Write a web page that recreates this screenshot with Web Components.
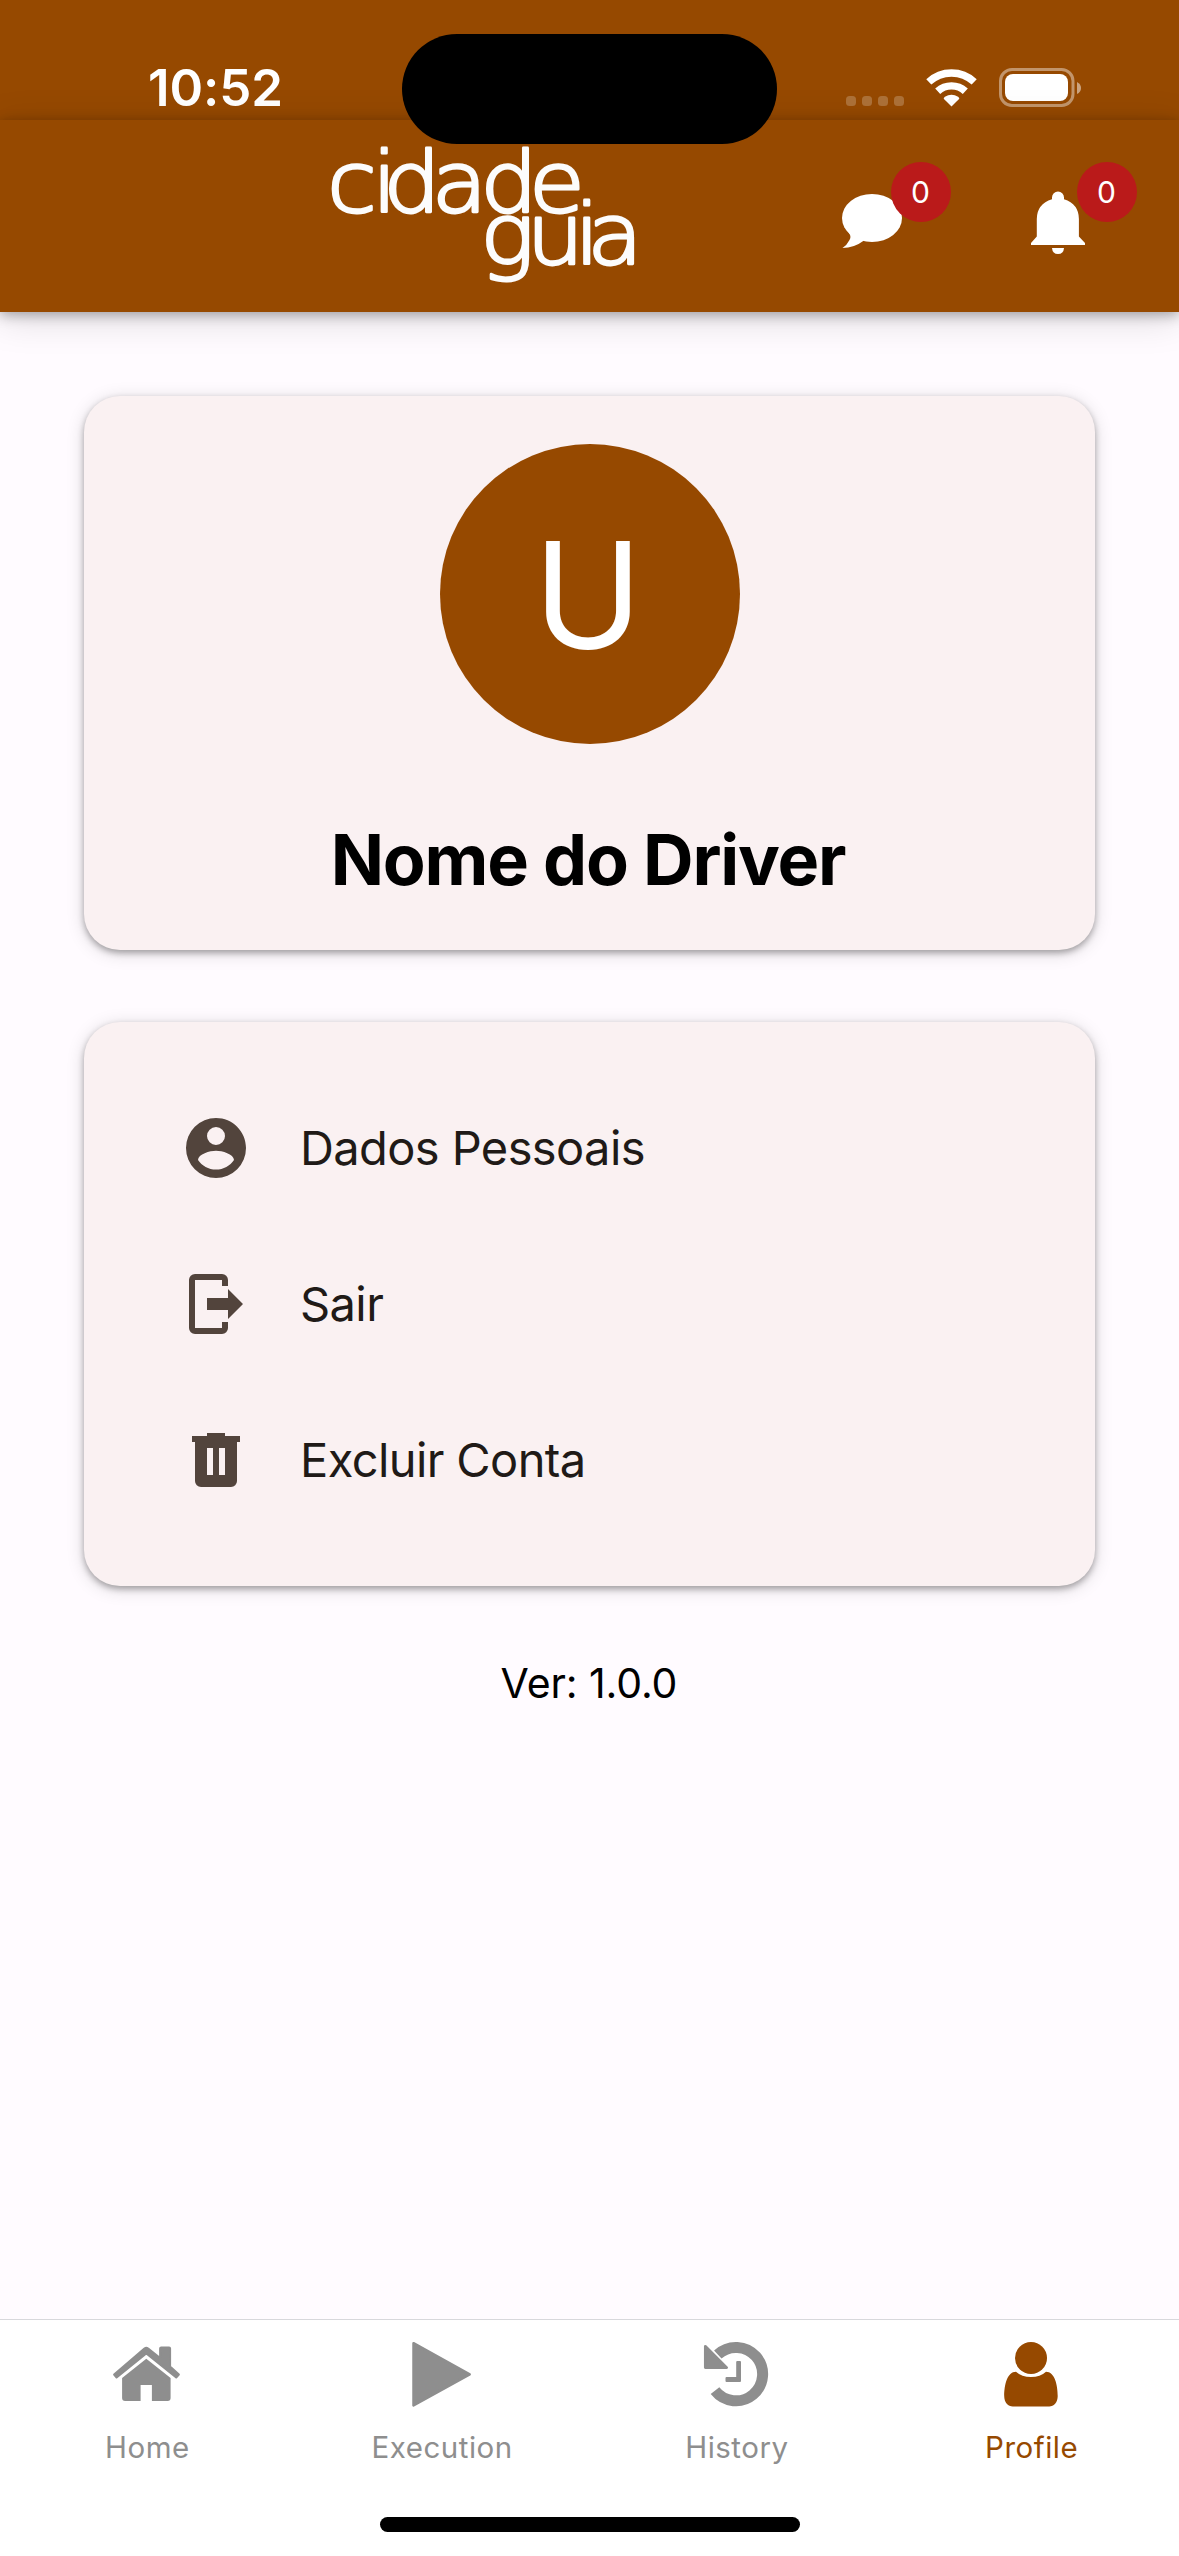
<!DOCTYPE html>
<html lang="pt-BR">
<head>
<meta charset="utf-8">
<title>Cidade Guia</title>
<style>
  html, body { margin: 0; padding: 0; }
  body {
    width: 1179px; height: 2556px; overflow: hidden;
    font-family: Inter, "Liberation Sans", sans-serif;
    --brand: #964900;
    --badge: #ba1a1a;
    --surface: #fffbff;
    --card: #faf1f2;
    --muted: #8e8e8e;
  }
</style>
</head>
<body>
<app-screen>
  <status-bar time="10:52"></status-bar>
  <app-header></app-header>
  <profile-card initial="U">Nome do Driver</profile-card>
  <menu-card>
    <menu-item icon="account">Dados Pessoais</menu-item>
    <menu-item icon="exit">Sair</menu-item>
    <menu-item icon="trash">Excluir Conta</menu-item>
  </menu-card>
  <app-version>Ver: 1.0.0</app-version>
  <tab-bar slot="tabs">
    <tab-item icon="home">Home</tab-item>
    <tab-item icon="play">Execution</tab-item>
    <tab-item icon="history">History</tab-item>
    <tab-item icon="person" active>Profile</tab-item>
  </tab-bar>
</app-screen>

<script>
const define = (name, render) => customElements.define(name, class extends HTMLElement {
  constructor() {
    super();
    this.attachShadow({ mode: 'open' }).innerHTML = render(this);
  }
});

define('app-screen', () => `
  <style>
    :host { display: flex; flex-direction: column; width: 1179px; height: 2556px; background: var(--surface); position: relative; }
    main { flex: 1; display: flex; flex-direction: column; min-height: 0; }
    .island { position: absolute; left: 402px; top: 34px; width: 375px; height: 110px; border-radius: 55px; background: #000; }
  </style>
  <main><slot></slot></main>
  <slot name="tabs"></slot>
  <div class="island"></div>`);

define('status-bar', el => `
  <style>
    :host { display: flex; justify-content: space-between; height: 120px; box-sizing: border-box; padding: 56px 97px 0 148px; background: var(--brand); color: #fff; }
    .time { font-size: 51px; font-weight: 600; line-height: 64px; letter-spacing: -0.1px; }
    svg { display: block; margin-top: 8px; }
  </style>
  <div class="time">${el.getAttribute('time')}</div>
  <svg width="237" height="48" viewBox="845 64 237 48">
    <g fill="#fff" fill-opacity=".22">
      <rect x="846" y="96" width="10" height="10" rx="3.5"/><rect x="862" y="96" width="10" height="10" rx="3.5"/>
      <rect x="878" y="96" width="10" height="10" rx="3.5"/><rect x="894" y="96" width="10" height="10" rx="3.5"/>
    </g>
    <g fill="none" stroke="#fff" stroke-width="7.4">
      <path d="M928.8 81.900A33.300 33.300 0 0 1 974.200 81.900"/>
      <path d="M937.700 91.300A20.300 20.300 0 0 1 965.300 91.300"/>
    </g>
    <path d="M951.500 106.500L943.700 98.700Q943.700 97.500 944.900 96.700A12.500 12.500 0 0 1 958.100 96.700Q959.300 97.500 959.300 98.700Z" fill="#fff"/>
    <rect x="1000.500" y="69.500" width="72.500" height="36" rx="11.500" fill="none" stroke="#fff" stroke-opacity=".42" stroke-width="3"/>
    <rect x="1005" y="74" width="63" height="27" rx="8" fill="#fff"/>
    <path d="M1077 82Q1081 84 1081 88T1077 94Z" fill="#fff" fill-opacity=".5"/>
  </svg>`);

define('app-header', () => `
  <style>
    :host { display: flex; height: 192px; flex: none; box-sizing: border-box; padding: 26px 42px 0 325px; justify-content: space-between; background: var(--brand);
      box-shadow: 0 6px 36px rgba(0,0,0,.15), 0 3px 12px rgba(0,0,0,.3); }
    svg { display: block; overflow: visible; }
    .logo { font-family: "DejaVu Sans Light", "DejaVu Sans", sans-serif; font-size: 84px; font-weight: 200; fill: #fcfcfc; stroke: #fcfcfc; stroke-width: 2.8px; stroke-linejoin: round; }
    .actions { display: flex; gap: 80px; padding-top: 16px; }
  </style>
  <svg width="320" height="146" viewBox="325 146 320 146">
    <g transform="scale(1.08 1)">
      <text class="logo" y="212" x="302.700 344.400 354.800 399.800 444.600 489.900">cidade</text>
      <text class="logo" y="264.500" x="444.600 487.600 531.900 543.800">guia</text>
    </g>
  </svg>
  <div class="actions">
    <header-action icon="chat" count="0"></header-action>
    <header-action icon="bell" count="0"></header-action>
  </div>`);

const headerIcons = {
  chat: `<svg width="60" height="64" viewBox="842 192 60 64"><ellipse cx="872" cy="218" rx="30" ry="24"/><path d="M848 232Q852 236 849.500 240Q847 245 842.500 248Q854 248 864 240.500Z"/></svg>`,
  bell: `<svg width="60" height="64" viewBox="1028 191 60 64"><path d="M1052 197.500A6 6 0 0 1 1064 197.500V199.200Q1078.900 204 1078.900 219V236.500L1085 243V245H1031V243L1036.800 236.500V219Q1036.800 204 1052 199.200Z"/><path d="M1052 248H1064Q1063.500 254 1058 254T1052 248Z"/></svg>`
};
define('header-action', el => `
  <style>
    :host { display: flex; align-items: flex-start; width: 106px; height: 100px; position: relative; color: #fff; }
    svg { display: block; fill: #fff; margin: ${el.getAttribute('icon') === 'chat' ? 30 : 29}px 0 0 -3px; }
    .badge { position: absolute; right: 0; top: 0; width: 60px; height: 60px; border-radius: 50%; background: var(--badge); font-size: 30px; line-height: 60px; text-align: center; text-indent: -1px; }
  </style>
  ${headerIcons[el.getAttribute('icon')]}
  <span class="badge">${el.getAttribute('count')}</span>`);

const cardBox = 'border-radius: 36px; background: var(--card); box-shadow: 0 3px 18px rgba(0,0,0,.15), 0 3px 6px rgba(0,0,0,.3);';

define('profile-card', el => `
  <style>
    :host { display: flex; flex-direction: column; align-items: center; flex: none; box-sizing: border-box; height: 554px; margin: 84px 84px 0; padding-top: 48px; ${cardBox} }
    .avatar { width: 300px; height: 300px; border-radius: 50%; background: var(--brand); color: #fff; font-size: 147px; font-weight: 400; line-height: 301px; text-align: center; text-indent: -3px; }
    .name { margin: 70px 3px 0 0; font-size: 70px; font-weight: 700; line-height: 92px; letter-spacing: -1.2px; color: #000; white-space: nowrap; }
  </style>
  <div class="avatar">${el.getAttribute('initial')}</div>
  <div class="name"><slot></slot></div>`);

define('menu-card', () => `
  <style>
    :host { display: flex; flex-direction: column; flex: none; box-sizing: border-box; height: 564px; margin: 72px 84px 0; padding: 48px 96px; ${cardBox} }
  </style><slot></slot>`);

const menuIcons = {
  account: 'M12,19.2C9.5,19.2 7.29,17.92 6,16C6.03,14 10,12.9 12,12.9C14,12.9 17.97,14 18,16C16.71,17.92 14.5,19.2 12,19.2M12,5A3,3 0 0,1 15,8A3,3 0 0,1 12,11A3,3 0 0,1 9,8A3,3 0 0,1 12,5M12,2A10,10 0 0,0 2,12A10,10 0 0,0 12,22A10,10 0 0,0 22,12C22,6.47 17.5,2 12,2Z',
  exit: 'M5 2H14A2 2 0 0 1 16 4V6H14V4H5V20H14V18H16V20A2 2 0 0 1 14 22H5A2 2 0 0 1 3 20V4A2 2 0 0 1 5 2ZM16 7L21 12L16 17V14H9V10H16Z',
  trash: 'M9 3H15V4H20V6H19V19A2 2 0 0 1 17 21H7A2 2 0 0 1 5 19V6H4V4H9ZM9 8V17H11V8ZM13 8V17H15V8Z'
};
define('menu-item', el => `
  <style>
    :host { display: flex; align-items: center; gap: 48px; height: 156px; color: #201a17; font-size: 47px; line-height: 72px; letter-spacing: -0.6px; white-space: nowrap; }
    svg { display: block; fill: #52443c; flex: none; }
  </style>
  <svg width="72" height="72" viewBox="0 0 24 24"><path fill-rule="evenodd" d="${menuIcons[el.getAttribute('icon')]}"/></svg>
  <span><slot></slot></span>`);

define('app-version', () => `
  <style>:host { display: block; margin-top: 67px; text-align: center; font-size: 41px; line-height: 60px; letter-spacing: -0.1px; text-indent: -1px; color: #000; }</style><slot></slot>`);

define('tab-bar', () => `
  <style>
    :host { display: flex; flex-direction: column; justify-content: space-between; align-items: center; height: 237px; box-sizing: border-box; padding-bottom: 24px; border-top: 1px solid #d8d8dc; background: #fff; }
    nav { display: flex; width: 100%; }
    .grip { width: 420px; height: 15px; border-radius: 8px; background: #000; }
  </style>
  <nav><slot></slot></nav><div class="grip"></div>`);

const tabIcons = {
  home: `<svg width="80" height="72" viewBox="107.400 2338 80 72"><path d="M117 2377.500L114.500 2374.500L144.800 2348.500Q146.700 2347.200 148.600 2348.500L160.500 2358V2348.500Q160.500 2347.500 161.500 2347.500H169.500Q170.500 2347.500 170.500 2348.500V2366.500L179.300 2374.500L176.600 2377.500L146.700 2353.500Z" stroke="currentColor" stroke-width="2" stroke-linejoin="round"/><path d="M146.700 2358.700L171 2378V2398Q171 2401 168 2401H152.300V2385H141V2401H125.500Q122.500 2401 122.500 2398V2378Z"/></svg>`,
  play: `<svg width="80" height="72" viewBox="402 2338 80 72"><path d="M413.500 2343.200L469.700 2374.300L413.500 2405.400Z" stroke="currentColor" stroke-width="2.500" stroke-linejoin="round"/></svg>`,
  history: `<svg width="80" height="72" viewBox="697 2338 80 72"><path d="M715 2390.700A26.700 26.700 0 1 0 717.800 2354.500" fill="none" stroke="currentColor" stroke-width="11"/><path d="M705.300 2346.300L726.700 2367.600H705.300Z" stroke="currentColor" stroke-width="2.700" stroke-linejoin="round"/><path d="M737.200 2361H740Q741 2361 741 2362V2381Q741 2382 740 2382H726.500Q725.500 2382 725.500 2381V2378Q725.500 2377 726.500 2377H736.200V2362Q736.200 2361 737.200 2361Z"/></svg>`,
  person: `<svg width="80" height="72" viewBox="991.800 2338 80 72"><circle cx="1030.800" cy="2358" r="16"/><path d="M1015.800 2371.700Q1021.500 2377 1030.800 2377T1045.800 2371.700C1054.500 2371.700 1057.500 2385 1057.500 2396C1057.500 2402.500 1053.500 2406.500 1049 2406.500H1012.600C1008 2406.500 1004 2402.500 1004 2396C1004 2385 1007 2371.700 1015.800 2371.700Z"/></svg>`
};
define('tab-item', el => `
  <style>
    :host { flex: 1; display: flex; flex-direction: column; align-items: center; padding-top: 18px; color: var(--muted); }
    :host([active]) { color: var(--brand); }
    svg { display: block; fill: currentColor; }
    span { margin-top: 17px; font-size: 29.500px; line-height: 40px; letter-spacing: .5px; }
  </style>
  ${tabIcons[el.getAttribute('icon')]}
  <span><slot></slot></span>`);
</script>
</body>
</html>
